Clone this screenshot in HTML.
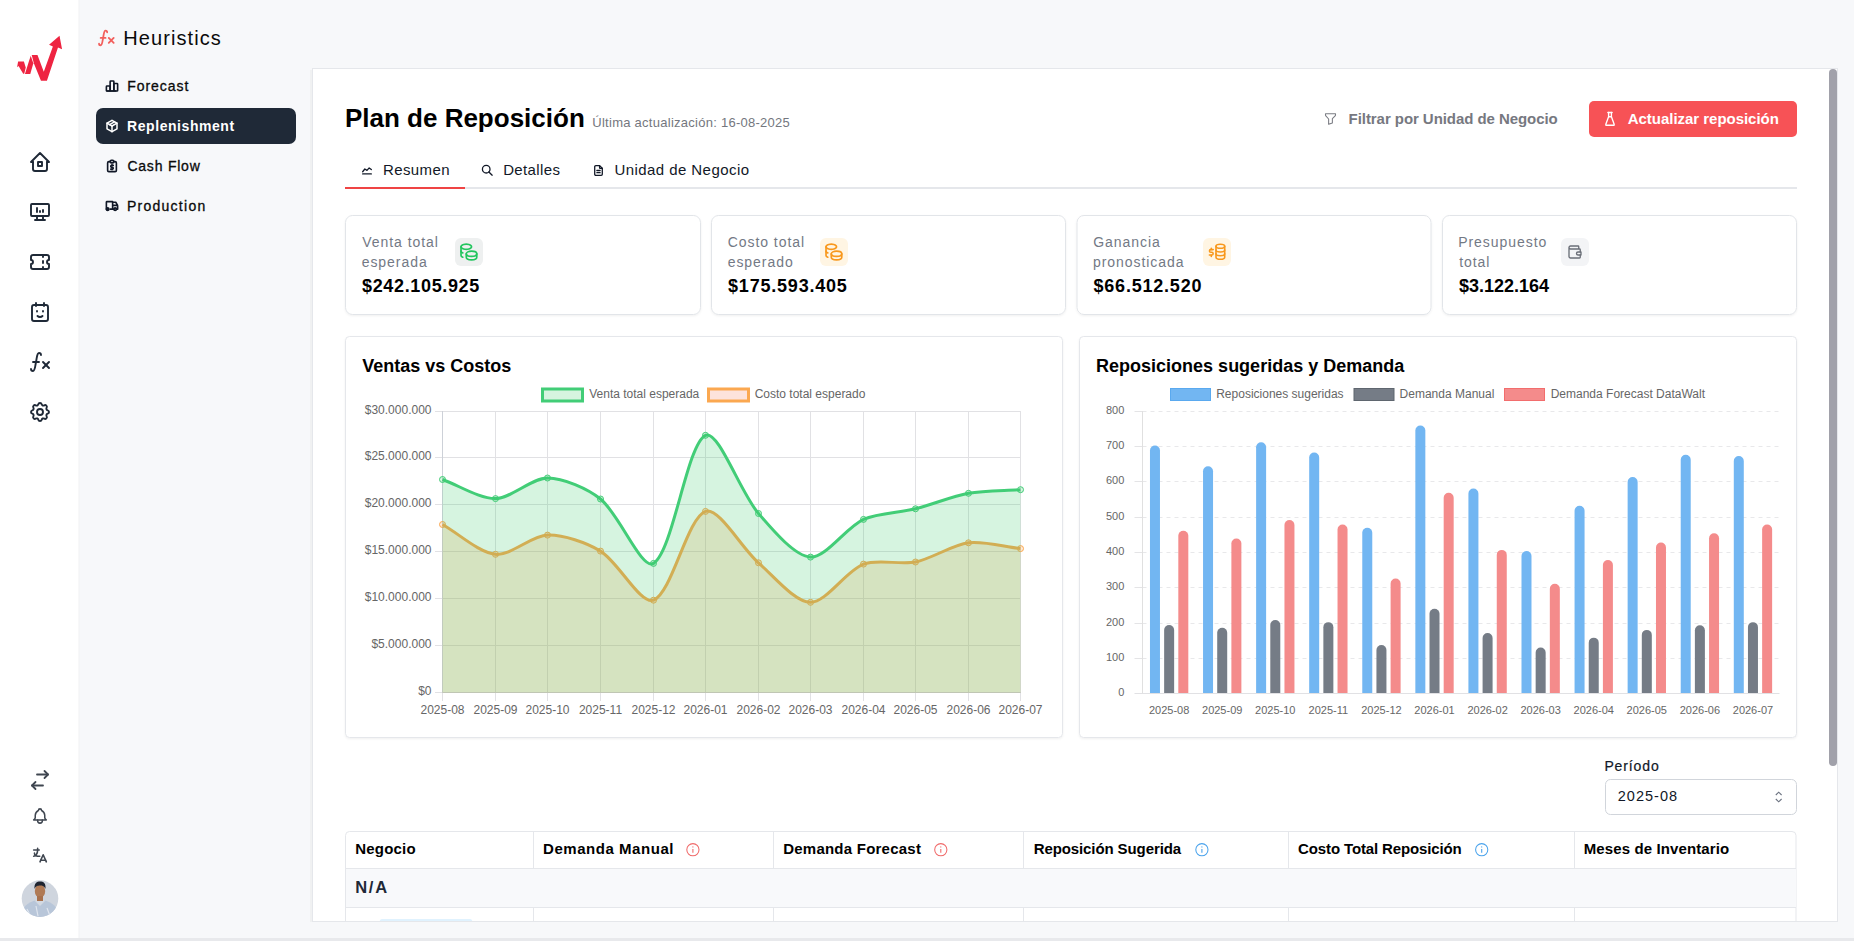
<!DOCTYPE html>
<html><head><meta charset="utf-8"><title>Plan de Reposición</title>
<style>
html,body{margin:0;padding:0;width:1854px;height:941px;overflow:hidden;background:#f7f8fa;}
svg{position:absolute;left:0;top:0;font-family:"Liberation Sans",sans-serif;}
</style></head><body>
<svg width="1854" height="941" viewBox="0 0 1854 941">
<defs><filter id="sh" x="-5%" y="-5%" width="110%" height="120%"><feDropShadow dx="0" dy="1" stdDeviation="0.8" flood-color="#000" flood-opacity="0.06"/></filter></defs>
<rect x="0" y="0" width="1854" height="941" rx="0" fill="#f7f8fa" />
<rect x="0" y="0" width="79" height="938" rx="0" fill="#ffffff" />
<rect x="78.5" y="0" width="1" height="938" rx="0" fill="#f1f2f4" />
<rect x="0" y="938" width="1854" height="3" rx="0" fill="#e8e9ec" />
<rect x="310" y="70" width="2" height="852" rx="0" fill="#f0f1f2" />
<rect x="312.5" y="68.5" width="1525" height="853" rx="0" fill="#ffffff" stroke="#e5e7eb" stroke-width="1" />
<rect x="1829" y="69" width="8" height="697" rx="4" fill="#a1a1aa" />
<g transform="translate(0,20) scale(0.08501594048884166)" fill="#ee2441"><path d="M213,489 L281,489 L303,559 L285,633 L273,633 L218,540 L201,556 Z"/>
<path d="M293,634 L356,634 L392,509 L361,421 Z"/>
<path d="M373,413 L441,413 L515,610 L622,312 L577,290 L700,185 L730,345 L682,322 L552,715 L482,715 L399,513 Z"/></g>
<g transform="translate(28,150) scale(1.0)" fill="none" stroke="#1f2937" stroke-width="1.9" stroke-linecap="round" stroke-linejoin="round" ><path d="M5 12l-2 0l9 -9l9 9l-2 0"/><path d="M5 12v7a2 2 0 0 0 2 2h10a2 2 0 0 0 2 -2v-7"/><path d="M10 12h4v4h-4z"/></g>
<g transform="translate(28,200) scale(1.0)" fill="none" stroke="#1f2937" stroke-width="1.9" stroke-linecap="round" stroke-linejoin="round" ><path d="M3 5a1 1 0 0 1 1 -1h16a1 1 0 0 1 1 1v10a1 1 0 0 1 -1 1h-16a1 1 0 0 1 -1 -1z"/><path d="M7 20h10"/><path d="M9 16v4"/><path d="M15 16v4"/><path d="M9 12v-4"/><path d="M12 12v-1"/><path d="M15 12v-2"/></g>
<g transform="translate(28,250) scale(1.0)" fill="none" stroke="#1f2937" stroke-width="1.9" stroke-linecap="round" stroke-linejoin="round" ><path d="M15 5l0 2"/><path d="M15 11l0 2"/><path d="M15 17l0 2"/><path d="M5 5h14a2 2 0 0 1 2 2v3a2 2 0 0 0 0 4v3a2 2 0 0 1 -2 2h-14a2 2 0 0 1 -2 -2v-3a2 2 0 0 0 0 -4v-3a2 2 0 0 1 2 -2"/></g>
<g transform="translate(28,300) scale(1.0)" fill="none" stroke="#1f2937" stroke-width="1.9" stroke-linecap="round" stroke-linejoin="round" ><path d="M4 7a2 2 0 0 1 2 -2h12a2 2 0 0 1 2 2v12a2 2 0 0 1 -2 2h-12a2 2 0 0 1 -2 -2z"/><path d="M8 3v3"/><path d="M16 3v3"/><path d="M9 11v.5"/><path d="M15 11v.5"/><path d="M9.5 16a3.5 3.5 0 0 0 5 0"/></g>
<g transform="translate(28,350) scale(1.0)" fill="none" stroke="#1f2937" stroke-width="1.9" stroke-linecap="round" stroke-linejoin="round" ><path d="M3 19a2 2 0 0 0 2 2c2 0 2 -4 3 -9s1 -9 3 -9a2 2 0 0 1 2 2"/><path d="M5 12h6"/><path d="M15 12l6 6"/><path d="M15 18l6 -6"/></g>
<g transform="translate(28,400) scale(1.0)" fill="none" stroke="#1f2937" stroke-width="1.9" stroke-linecap="round" stroke-linejoin="round" ><path d="M10.325 4.317c.426 -1.756 2.924 -1.756 3.35 0a1.724 1.724 0 0 0 2.573 1.066c1.543 -.94 3.31 .826 2.37 2.37a1.724 1.724 0 0 0 1.065 2.572c1.756 .426 1.756 2.924 0 3.35a1.724 1.724 0 0 0 -1.066 2.573c.94 1.543 -.826 3.31 -2.37 2.37a1.724 1.724 0 0 0 -2.572 1.065c-.426 1.756 -2.924 1.756 -3.35 0a1.724 1.724 0 0 0 -2.573 -1.066c-1.543 .94 -3.31 -.826 -2.37 -2.37a1.724 1.724 0 0 0 -1.065 -2.572c-1.756 -.426 -1.756 -2.924 0 -3.35a1.724 1.724 0 0 0 1.066 -2.573c-.94 -1.543 .826 -3.31 2.37 -2.37c1 .608 2.296 .07 2.572 -1.065z"/><path d="M9 12a3 3 0 1 0 6 0a3 3 0 0 0 -6 0"/></g>
<g transform="translate(28,768) scale(1.0)" fill="none" stroke="#3f4650" stroke-width="1.8" stroke-linecap="round" stroke-linejoin="round" ><path d="M9 6.5h11"/><path d="M16.5 3l3.5 3.5l-3.5 3.5"/><path d="M15 17.5h-11"/><path d="M7.5 14l-3.5 3.5l3.5 3.5"/></g>
<g transform="translate(30.5,806.5) scale(0.7916666666666666)" fill="none" stroke="#3f4650" stroke-width="1.9" stroke-linecap="round" stroke-linejoin="round" ><path d="M10 5a2 2 0 1 1 4 0a7 7 0 0 1 4 6v3a4 4 0 0 0 2 3h-16a4 4 0 0 0 2 -3v-3a7 7 0 0 1 4 -6"/><path d="M9 17v1a3 3 0 0 0 6 0v-1"/></g>
<g transform="translate(30.5,846) scale(0.7916666666666666)" fill="none" stroke="#3f4650" stroke-width="2" stroke-linecap="round" stroke-linejoin="round" ><path d="M4 5h7"/><path d="M9 3v2c0 4.418 -2.239 8 -5 8"/><path d="M5 9c0 2.144 2.952 3.908 6.7 4"/><path d="M12 20l4 -9l4 9"/><path d="M19.1 18h-6.2"/></g>
<g><clipPath id="av"><circle cx="40" cy="898.6" r="18.3"/></clipPath>
<g clip-path="url(#av)"><rect x="21" y="880" width="38" height="38" fill="#cfd5de"/>
<path d="M20 918 C22 906 29 900.5 40 900 C51 900.5 58 906 60 918 Z" fill="#b8c6d9"/><path d="M27 909 L31 917 M47 908 L50 916 M36 906 L38 916" stroke="#dfe5ee" stroke-width="1.2"/>
<path d="M35 901 L40 906 L45 901 L43.5 899.5 L36.5 899.5 Z" fill="#d3d9e2"/>
<ellipse cx="40" cy="891" rx="5.2" ry="6.8" fill="#b07a55"/>
<rect x="37" y="896" width="6" height="5" fill="#a8704c"/>
<path d="M34.5 889 C34 883 37 881.5 40 881.5 C43.5 881.5 46 883 45.5 889 C44.5 886 42 885.5 40 885.5 C38 885.5 35.5 886 34.5 889 Z" fill="#1e2430"/>
</g></g>
<g transform="translate(96.6,28.2) scale(0.8125)" fill="none" stroke="#f25f5c" stroke-width="2.2" stroke-linecap="round" stroke-linejoin="round" ><path d="M3 19a2 2 0 0 0 2 2c2 0 2 -4 3 -9s1 -9 3 -9a2 2 0 0 1 2 2"/><path d="M5 12h6"/><path d="M15 12l6 6"/><path d="M15 18l6 -6"/></g>
<text x="123.28" y="44.90" font-size="20" font-weight="400" fill="#0a0a0a" letter-spacing="1.081" >Heuristics</text>
<rect x="96" y="108" width="200" height="36" rx="7" fill="#1f2937" />
<text x="127.28" y="91.00" font-size="14" font-weight="400" fill="#0a0a0a" letter-spacing="0.946" stroke="#0a0a0a" stroke-width="0.3">Forecast</text>
<text x="127.12" y="131.20" font-size="14" font-weight="700" fill="#ffffff" letter-spacing="0.552" >Replenishment</text>
<text x="127.38" y="171.00" font-size="14" font-weight="400" fill="#0a0a0a" letter-spacing="0.787" stroke="#0a0a0a" stroke-width="0.3">Cash Flow</text>
<text x="126.88" y="210.90" font-size="14" font-weight="400" fill="#0a0a0a" letter-spacing="1.269" stroke="#0a0a0a" stroke-width="0.3">Production</text>
<g transform="translate(104.5,78.5) scale(0.625)" fill="none" stroke="#111827" stroke-width="2.6" stroke-linecap="round" stroke-linejoin="round" ><path d="M3 13a1 1 0 0 1 1 -1h4a1 1 0 0 1 1 1v6a1 1 0 0 1 -1 1h-4a1 1 0 0 1 -1 -1z"/><path d="M15 9a1 1 0 0 1 1 -1h4a1 1 0 0 1 1 1v10a1 1 0 0 1 -1 1h-4a1 1 0 0 1 -1 -1z"/><path d="M9 5a1 1 0 0 1 1 -1h4a1 1 0 0 1 1 1v14a1 1 0 0 1 -1 1h-4a1 1 0 0 1 -1 -1z"/><path d="M4 20h14"/></g>
<g transform="translate(104.5,118.5) scale(0.625)" fill="none" stroke="#ffffff" stroke-width="2.4" stroke-linecap="round" stroke-linejoin="round" ><path d="M12 3l8 4.5l0 9l-8 4.5l-8 -4.5l0 -9l8 -4.5"/><path d="M12 12l8 -4.5"/><path d="M12 12l0 9"/><path d="M12 12l-8 -4.5"/><path d="M16 5.25l-8 4.5"/></g>
<g transform="translate(104.5,158.5) scale(0.625)" fill="none" stroke="#111827" stroke-width="2.6" stroke-linecap="round" stroke-linejoin="round" ><path d="M9 5h-2a2 2 0 0 0 -2 2v12a2 2 0 0 0 2 2h10a2 2 0 0 0 2 -2v-12a2 2 0 0 0 -2 -2h-2"/><path d="M9 3m0 2a2 2 0 0 1 2 -2h2a2 2 0 0 1 2 2v0a2 2 0 0 1 -2 2h-2a2 2 0 0 1 -2 -2z"/><path d="M14 11h-2.5a1.5 1.5 0 0 0 0 3h1a1.5 1.5 0 0 1 0 3h-2.5"/><path d="M12 17v1m0 -8v1"/></g>
<g transform="translate(104.5,198.5) scale(0.625)" fill="none" stroke="#111827" stroke-width="2.6" stroke-linecap="round" stroke-linejoin="round" ><path d="M5 17m-2 0a2 2 0 1 0 4 0a2 2 0 1 0 -4 0"/><path d="M17 17m-2 0a2 2 0 1 0 4 0a2 2 0 1 0 -4 0"/><path d="M5 17h-2v-11a1 1 0 0 1 1 -1h9v12m-4 0h6m4 0h2v-6h-8m0 -5h5l3 5"/></g>
<text x="344.95" y="126.60" font-size="26" font-weight="700" fill="#000000" letter-spacing="0.000" >Plan de Reposición</text>
<text x="592.30" y="126.90" font-size="13" font-weight="400" fill="#74777e" letter-spacing="0.265" >Última actualización: 16-08-2025</text>
<g transform="translate(1323,111.2) scale(0.625)" fill="none" stroke="#7a7c83" stroke-width="1.7" stroke-linecap="round" stroke-linejoin="round" ><path d="M4 4h16v2.172a2 2 0 0 1 -.586 1.414l-4.414 4.414v7l-6 2v-8.5l-4.48 -4.928a2 2 0 0 1 -.52 -1.345v-2.227z"/></g>
<text x="1348.60" y="124.00" font-size="15" font-weight="700" fill="#76787f" letter-spacing="-0.062" >Filtrar por Unidad de Negocio</text>
<rect x="1589" y="101" width="208" height="36" rx="5" fill="#f75256" />
<g transform="translate(1601.5,110.4) scale(0.7083333333333334)" fill="none" stroke="#ffffff" stroke-width="1.9" stroke-linecap="round" stroke-linejoin="round" ><path d="M9 3l6 0"/><path d="M10 9l4 0"/><path d="M10 3v6l-4 11a.7 .7 0 0 0 .5 1h11a.7 .7 0 0 0 .5 -1l-4 -11v-6"/></g>
<text x="1627.72" y="124.20" font-size="15" font-weight="700" fill="#ffffff" letter-spacing="-0.029" >Actualizar reposición</text>
<rect x="345" y="187" width="1452" height="2" rx="0" fill="#e5e7eb" />
<rect x="345" y="187" width="120" height="2" rx="0" fill="#ef4444" />
<g transform="translate(360.5,163.6) scale(0.5416666666666666)" fill="none" stroke="#111827" stroke-width="2.4" stroke-linecap="round" stroke-linejoin="round" ><path d="M4 19h16"/><path d="M4 15l4 -5l4 2.5l4 -4.5l4 3"/></g>
<g transform="translate(480.8,163.8) scale(0.5416666666666666)" fill="none" stroke="#111827" stroke-width="2.4" stroke-linecap="round" stroke-linejoin="round" ><path d="M10 10m-7 0a7 7 0 1 0 14 0a7 7 0 1 0 -14 0"/><path d="M21 21l-6 -6"/></g>
<g transform="translate(592,164) scale(0.5416666666666666)" fill="none" stroke="#111827" stroke-width="2.4" stroke-linecap="round" stroke-linejoin="round" ><path d="M14 3v4a1 1 0 0 0 1 1h4"/><path d="M17 21h-10a2 2 0 0 1 -2 -2v-14a2 2 0 0 1 2 -2h7l5 5v11a2 2 0 0 1 -2 2z"/><path d="M9 12h6"/><path d="M9 16h6"/></g>
<text x="382.95" y="175.20" font-size="15" font-weight="400" fill="#111827" letter-spacing="0.417" >Resumen</text>
<text x="503.15" y="175.20" font-size="15" font-weight="400" fill="#111827" letter-spacing="0.371" >Detalles</text>
<text x="614.48" y="175.20" font-size="15" font-weight="400" fill="#111827" letter-spacing="0.433" >Unidad de Negocio</text>
<rect x="345.5" y="215.5" width="355" height="99" rx="7" fill="#ffffff" stroke="#e2e5e9" stroke-width="1" filter="url(#sh)"/>
<text x="362.30" y="246.80" font-size="14" font-weight="400" fill="#737985" letter-spacing="0.950" >Venta total</text>
<text x="361.68" y="266.70" font-size="14" font-weight="400" fill="#737985" letter-spacing="0.950" >esperada</text>
<text x="362.05" y="291.60" font-size="18" font-weight="700" fill="#000000" letter-spacing="0.648" >$242.105.925</text>
<rect x="711.5" y="215.5" width="354" height="99" rx="7" fill="#ffffff" stroke="#e2e5e9" stroke-width="1" filter="url(#sh)"/>
<text x="727.67" y="246.80" font-size="14" font-weight="400" fill="#737985" letter-spacing="0.950" >Costo total</text>
<text x="727.67" y="266.70" font-size="14" font-weight="400" fill="#737985" letter-spacing="0.950" >esperado</text>
<text x="728.05" y="291.60" font-size="18" font-weight="700" fill="#000000" letter-spacing="0.793" >$175.593.405</text>
<rect x="1077.0" y="215.5" width="354" height="99" rx="7" fill="#ffffff" stroke="#e2e5e9" stroke-width="1" filter="url(#sh)"/>
<text x="1093.17" y="246.80" font-size="14" font-weight="400" fill="#737985" letter-spacing="0.950" >Ganancia</text>
<text x="1092.92" y="266.70" font-size="14" font-weight="400" fill="#737985" letter-spacing="0.950" >pronosticada</text>
<text x="1093.55" y="291.60" font-size="18" font-weight="700" fill="#000000" letter-spacing="0.778" >$66.512.520</text>
<rect x="1442.5" y="215.5" width="354" height="99" rx="7" fill="#ffffff" stroke="#e2e5e9" stroke-width="1" filter="url(#sh)"/>
<text x="1458.17" y="246.80" font-size="14" font-weight="400" fill="#737985" letter-spacing="0.950" >Presupuesto</text>
<text x="1459.17" y="266.70" font-size="14" font-weight="400" fill="#737985" letter-spacing="0.950" >total</text>
<text x="1459.05" y="291.60" font-size="18" font-weight="700" fill="#000000" letter-spacing="-0.008" >$3.122.164</text>
<rect x="455" y="238" width="28" height="28" rx="6" fill="#eef0f0" />
<g transform="translate(458.4,241.5) scale(0.875)" fill="none" stroke="#22c55e" stroke-width="1.9" stroke-linecap="round" stroke-linejoin="round" ><path d="M9 14c0 1.657 2.686 3 6 3s6 -1.343 6 -3s-2.686 -3 -6 -3s-6 1.343 -6 3z"/><path d="M9 14v4c0 1.656 2.686 3 6 3s6 -1.344 6 -3v-4"/><path d="M3 6c0 1.072 1.144 2.062 3 2.598s4.144 .536 6 0c1.856 -.536 3 -1.526 3 -2.598c0 -1.072 -1.144 -2.062 -3 -2.598s-4.144 -.536 -6 0c-1.856 .536 -3 1.526 -3 2.598z"/><path d="M3 6v10c0 .888 .772 1.45 2 2"/><path d="M3 11c0 .888 .772 1.45 2 2"/></g>
<rect x="820" y="238" width="28" height="28" rx="6" fill="#fff5e3" />
<g transform="translate(823.4,241.5) scale(0.875)" fill="none" stroke="#f8981d" stroke-width="1.9" stroke-linecap="round" stroke-linejoin="round" ><path d="M9 14c0 1.657 2.686 3 6 3s6 -1.343 6 -3s-2.686 -3 -6 -3s-6 1.343 -6 3z"/><path d="M9 14v4c0 1.656 2.686 3 6 3s6 -1.344 6 -3v-4"/><path d="M3 6c0 1.072 1.144 2.062 3 2.598s4.144 .536 6 0c1.856 -.536 3 -1.526 3 -2.598c0 -1.072 -1.144 -2.062 -3 -2.598s-4.144 -.536 -6 0c-1.856 .536 -3 1.526 -3 2.598z"/><path d="M3 6v10c0 .888 .772 1.45 2 2"/><path d="M3 11c0 .888 .772 1.45 2 2"/></g>
<rect x="1203" y="238" width="28" height="28" rx="6" fill="#fff5e3" />
<g fill="none" stroke="#f8981d" stroke-width="1.6" stroke-linecap="round" stroke-linejoin="round"><ellipse cx="1220.35" cy="246.3" rx="4.35" ry="2"/><path d="M1216,246.3 V257.3 A4.35,2 0 0 0 1224.7,257.3 V246.3"/><path d="M1216,250 A4.35,2 0 0 0 1224.7,250"/><path d="M1216,253.7 A4.35,2 0 0 0 1224.7,253.7"/><path d="M1213.2,249.6 H1210.8 A1.35,1.35 0 0 0 1210.8,252.3 H1211.8 A1.35,1.35 0 0 1 1211.8,255 H1209.4"/><path d="M1211.3,248.2 V249.4 M1211.3,255.2 V256.4"/></g>
<rect x="1561" y="238" width="28" height="28" rx="6" fill="#f3f4f6" />
<g transform="translate(1566,243) scale(0.75)" fill="none" stroke="#6b6f78" stroke-width="1.8" stroke-linecap="round" stroke-linejoin="round" ><path d="M17 8v-3a1 1 0 0 0 -1 -1h-10a2 2 0 0 0 0 4h12a1 1 0 0 1 1 1v3m0 4v3a1 1 0 0 1 -1 1h-12a2 2 0 0 1 -2 -2v-12"/><path d="M20 12v4h-4a2 2 0 0 1 0 -4h4"/></g>
<rect x="345.5" y="336.5" width="717" height="401" rx="4" fill="#ffffff" stroke="#e5e7eb" stroke-width="1" filter="url(#sh)"/>
<rect x="1079.5" y="336.5" width="717" height="401" rx="4" fill="#ffffff" stroke="#e5e7eb" stroke-width="1" filter="url(#sh)"/>
<text x="362.18" y="372.00" font-size="18" font-weight="700" fill="#000000" letter-spacing="0.000" >Ventas vs Costos</text>
<text x="1096.08" y="372.00" font-size="18" font-weight="700" fill="#000000" letter-spacing="0.000" >Reposiciones sugeridas y Demanda</text>
<line x1="435" y1="692.5" x2="1021" y2="692.5" stroke="#e1e1e4" stroke-width="1"/>
<line x1="435" y1="645.5" x2="1021" y2="645.5" stroke="#e1e1e4" stroke-width="1"/>
<line x1="435" y1="598.5" x2="1021" y2="598.5" stroke="#e1e1e4" stroke-width="1"/>
<line x1="435" y1="551.5" x2="1021" y2="551.5" stroke="#e1e1e4" stroke-width="1"/>
<line x1="435" y1="504.5" x2="1021" y2="504.5" stroke="#e1e1e4" stroke-width="1"/>
<line x1="435" y1="457.5" x2="1021" y2="457.5" stroke="#e1e1e4" stroke-width="1"/>
<line x1="435" y1="411.5" x2="1021" y2="411.5" stroke="#e1e1e4" stroke-width="1"/>
<line x1="442.5" y1="411" x2="442.5" y2="701" stroke="#e1e1e4" stroke-width="1"/>
<line x1="495.5" y1="411" x2="495.5" y2="701" stroke="#e1e1e4" stroke-width="1"/>
<line x1="547.5" y1="411" x2="547.5" y2="701" stroke="#e1e1e4" stroke-width="1"/>
<line x1="600.5" y1="411" x2="600.5" y2="701" stroke="#e1e1e4" stroke-width="1"/>
<line x1="653.5" y1="411" x2="653.5" y2="701" stroke="#e1e1e4" stroke-width="1"/>
<line x1="705.5" y1="411" x2="705.5" y2="701" stroke="#e1e1e4" stroke-width="1"/>
<line x1="758.5" y1="411" x2="758.5" y2="701" stroke="#e1e1e4" stroke-width="1"/>
<line x1="810.5" y1="411" x2="810.5" y2="701" stroke="#e1e1e4" stroke-width="1"/>
<line x1="863.5" y1="411" x2="863.5" y2="701" stroke="#e1e1e4" stroke-width="1"/>
<line x1="915.5" y1="411" x2="915.5" y2="701" stroke="#e1e1e4" stroke-width="1"/>
<line x1="968.5" y1="411" x2="968.5" y2="701" stroke="#e1e1e4" stroke-width="1"/>
<line x1="1020.5" y1="411" x2="1020.5" y2="701" stroke="#e1e1e4" stroke-width="1"/>
<line x1="442.5" y1="411" x2="442.5" y2="692.5" stroke="#cdd1d8" stroke-width="1"/>
<line x1="442" y1="692.5" x2="1021" y2="692.5" stroke="#cccccc" stroke-width="1"/>
<text x="431.50" y="695.10" font-size="12" font-weight="400" fill="#666666" text-anchor="end" >$0</text>
<text x="431.50" y="648.10" font-size="12" font-weight="400" fill="#666666" text-anchor="end" >$5.000.000</text>
<text x="431.50" y="601.10" font-size="12" font-weight="400" fill="#666666" text-anchor="end" >$10.000.000</text>
<text x="431.50" y="554.10" font-size="12" font-weight="400" fill="#666666" text-anchor="end" >$15.000.000</text>
<text x="431.50" y="507.10" font-size="12" font-weight="400" fill="#666666" text-anchor="end" >$20.000.000</text>
<text x="431.50" y="460.10" font-size="12" font-weight="400" fill="#666666" text-anchor="end" >$25.000.000</text>
<text x="431.50" y="414.10" font-size="12" font-weight="400" fill="#666666" text-anchor="end" >$30.000.000</text>
<text x="442.50" y="714.00" font-size="12" font-weight="400" fill="#666666" text-anchor="middle" >2025-08</text>
<text x="495.50" y="714.00" font-size="12" font-weight="400" fill="#666666" text-anchor="middle" >2025-09</text>
<text x="547.50" y="714.00" font-size="12" font-weight="400" fill="#666666" text-anchor="middle" >2025-10</text>
<text x="600.50" y="714.00" font-size="12" font-weight="400" fill="#666666" text-anchor="middle" >2025-11</text>
<text x="653.50" y="714.00" font-size="12" font-weight="400" fill="#666666" text-anchor="middle" >2025-12</text>
<text x="705.50" y="714.00" font-size="12" font-weight="400" fill="#666666" text-anchor="middle" >2026-01</text>
<text x="758.50" y="714.00" font-size="12" font-weight="400" fill="#666666" text-anchor="middle" >2026-02</text>
<text x="810.50" y="714.00" font-size="12" font-weight="400" fill="#666666" text-anchor="middle" >2026-03</text>
<text x="863.50" y="714.00" font-size="12" font-weight="400" fill="#666666" text-anchor="middle" >2026-04</text>
<text x="915.50" y="714.00" font-size="12" font-weight="400" fill="#666666" text-anchor="middle" >2026-05</text>
<text x="968.50" y="714.00" font-size="12" font-weight="400" fill="#666666" text-anchor="middle" >2026-06</text>
<text x="1020.50" y="714.00" font-size="12" font-weight="400" fill="#666666" text-anchor="middle" >2026-07</text>
<path d="M442.50,524.50 C458.40,533.44 479.02,552.64 495.50,554.30 C510.52,555.82 531.74,535.58 547.50,535.10 C563.24,534.62 586.70,542.63 600.50,551.10 C618.50,562.16 640.51,605.11 653.50,600.20 C672.01,593.20 687.16,517.93 705.50,511.40 C718.66,506.71 741.78,548.33 758.50,562.80 C773.28,575.60 794.75,602.11 810.50,602.30 C826.25,602.50 845.97,570.83 863.50,564.10 C877.47,558.74 900.38,565.07 915.50,562.00 C931.88,558.68 952.16,544.88 968.50,542.80 C983.66,540.86 1004.90,546.86 1020.50,548.60 L1020.50,692.5 L442.50,692.5 Z" fill="rgba(251,160,75,0.22)"/>
<path d="M442.50,524.50 C458.40,533.44 479.02,552.64 495.50,554.30 C510.52,555.82 531.74,535.58 547.50,535.10 C563.24,534.62 586.70,542.63 600.50,551.10 C618.50,562.16 640.51,605.11 653.50,600.20 C672.01,593.20 687.16,517.93 705.50,511.40 C718.66,506.71 741.78,548.33 758.50,562.80 C773.28,575.60 794.75,602.11 810.50,602.30 C826.25,602.50 845.97,570.83 863.50,564.10 C877.47,558.74 900.38,565.07 915.50,562.00 C931.88,558.68 952.16,544.88 968.50,542.80 C983.66,540.86 1004.90,546.86 1020.50,548.60" fill="none" stroke="#fba850" stroke-width="3"/>
<circle cx="442.50" cy="524.50" r="3" fill="rgba(251,160,75,0.22)" stroke="#fba850" stroke-width="1"/>
<circle cx="495.50" cy="554.30" r="3" fill="rgba(251,160,75,0.22)" stroke="#fba850" stroke-width="1"/>
<circle cx="547.50" cy="535.10" r="3" fill="rgba(251,160,75,0.22)" stroke="#fba850" stroke-width="1"/>
<circle cx="600.50" cy="551.10" r="3" fill="rgba(251,160,75,0.22)" stroke="#fba850" stroke-width="1"/>
<circle cx="653.50" cy="600.20" r="3" fill="rgba(251,160,75,0.22)" stroke="#fba850" stroke-width="1"/>
<circle cx="705.50" cy="511.40" r="3" fill="rgba(251,160,75,0.22)" stroke="#fba850" stroke-width="1"/>
<circle cx="758.50" cy="562.80" r="3" fill="rgba(251,160,75,0.22)" stroke="#fba850" stroke-width="1"/>
<circle cx="810.50" cy="602.30" r="3" fill="rgba(251,160,75,0.22)" stroke="#fba850" stroke-width="1"/>
<circle cx="863.50" cy="564.10" r="3" fill="rgba(251,160,75,0.22)" stroke="#fba850" stroke-width="1"/>
<circle cx="915.50" cy="562.00" r="3" fill="rgba(251,160,75,0.22)" stroke="#fba850" stroke-width="1"/>
<circle cx="968.50" cy="542.80" r="3" fill="rgba(251,160,75,0.22)" stroke="#fba850" stroke-width="1"/>
<circle cx="1020.50" cy="548.60" r="3" fill="rgba(251,160,75,0.22)" stroke="#fba850" stroke-width="1"/>
<path d="M442.50,479.50 C458.40,485.23 479.69,498.83 495.50,498.60 C511.19,498.38 531.90,477.94 547.50,478.00 C563.40,478.06 587.59,488.60 600.50,499.00 C619.39,514.22 641.65,570.59 653.50,563.40 C673.15,551.48 686.79,444.19 705.50,435.30 C718.29,429.22 740.17,492.24 758.50,513.50 C771.67,528.78 794.42,556.20 810.50,557.10 C825.92,557.97 846.15,527.38 863.50,519.40 C877.65,512.89 900.06,512.64 915.50,508.80 C931.56,504.81 952.30,496.25 968.50,493.30 C983.80,490.52 1004.90,490.78 1020.50,489.70 L1020.50,692.5 L442.50,692.5 Z" fill="rgba(52,199,100,0.2)"/>
<path d="M442.50,479.50 C458.40,485.23 479.69,498.83 495.50,498.60 C511.19,498.38 531.90,477.94 547.50,478.00 C563.40,478.06 587.59,488.60 600.50,499.00 C619.39,514.22 641.65,570.59 653.50,563.40 C673.15,551.48 686.79,444.19 705.50,435.30 C718.29,429.22 740.17,492.24 758.50,513.50 C771.67,528.78 794.42,556.20 810.50,557.10 C825.92,557.97 846.15,527.38 863.50,519.40 C877.65,512.89 900.06,512.64 915.50,508.80 C931.56,504.81 952.30,496.25 968.50,493.30 C983.80,490.52 1004.90,490.78 1020.50,489.70" fill="none" stroke="#42cd77" stroke-width="3"/>
<circle cx="442.50" cy="479.50" r="3" fill="rgba(52,199,100,0.2)" stroke="#42cd77" stroke-width="1"/>
<circle cx="495.50" cy="498.60" r="3" fill="rgba(52,199,100,0.2)" stroke="#42cd77" stroke-width="1"/>
<circle cx="547.50" cy="478.00" r="3" fill="rgba(52,199,100,0.2)" stroke="#42cd77" stroke-width="1"/>
<circle cx="600.50" cy="499.00" r="3" fill="rgba(52,199,100,0.2)" stroke="#42cd77" stroke-width="1"/>
<circle cx="653.50" cy="563.40" r="3" fill="rgba(52,199,100,0.2)" stroke="#42cd77" stroke-width="1"/>
<circle cx="705.50" cy="435.30" r="3" fill="rgba(52,199,100,0.2)" stroke="#42cd77" stroke-width="1"/>
<circle cx="758.50" cy="513.50" r="3" fill="rgba(52,199,100,0.2)" stroke="#42cd77" stroke-width="1"/>
<circle cx="810.50" cy="557.10" r="3" fill="rgba(52,199,100,0.2)" stroke="#42cd77" stroke-width="1"/>
<circle cx="863.50" cy="519.40" r="3" fill="rgba(52,199,100,0.2)" stroke="#42cd77" stroke-width="1"/>
<circle cx="915.50" cy="508.80" r="3" fill="rgba(52,199,100,0.2)" stroke="#42cd77" stroke-width="1"/>
<circle cx="968.50" cy="493.30" r="3" fill="rgba(52,199,100,0.2)" stroke="#42cd77" stroke-width="1"/>
<circle cx="1020.50" cy="489.70" r="3" fill="rgba(52,199,100,0.2)" stroke="#42cd77" stroke-width="1"/>
<rect x="542.5" y="389" width="40" height="12" fill="rgba(52,199,100,0.2)" stroke="#42cd77" stroke-width="3"/>
<text x="589.20" y="398.00" font-size="12" font-weight="400" fill="#666666" letter-spacing="0.000" >Venta total esperada</text>
<rect x="708.5" y="389" width="40" height="12" fill="#fde3dc" stroke="#fba850" stroke-width="3"/>
<text x="754.67" y="398.00" font-size="12" font-weight="400" fill="#666666" letter-spacing="0.000" >Costo total esperado</text>
<line x1="1134.5" y1="693.5" x2="1779.5" y2="693.5" stroke="#e1e1e4" stroke-width="1"/>
<text x="1124.30" y="696.00" font-size="11" font-weight="400" fill="#666666" text-anchor="end" >0</text>
<line x1="1134.5" y1="658.5" x2="1142.5" y2="658.5" stroke="#e4e4e6" stroke-width="1"/>
<line x1="1142.5" y1="658.5" x2="1779.5" y2="658.5" stroke="#e8e8ea" stroke-width="1" stroke-dasharray="4 4"/>
<text x="1124.30" y="661.00" font-size="11" font-weight="400" fill="#666666" text-anchor="end" >100</text>
<line x1="1134.5" y1="623.5" x2="1142.5" y2="623.5" stroke="#e4e4e6" stroke-width="1"/>
<line x1="1142.5" y1="623.5" x2="1779.5" y2="623.5" stroke="#e8e8ea" stroke-width="1" stroke-dasharray="4 4"/>
<text x="1124.30" y="626.00" font-size="11" font-weight="400" fill="#666666" text-anchor="end" >200</text>
<line x1="1134.5" y1="587.5" x2="1142.5" y2="587.5" stroke="#e4e4e6" stroke-width="1"/>
<line x1="1142.5" y1="587.5" x2="1779.5" y2="587.5" stroke="#e8e8ea" stroke-width="1" stroke-dasharray="4 4"/>
<text x="1124.30" y="590.00" font-size="11" font-weight="400" fill="#666666" text-anchor="end" >300</text>
<line x1="1134.5" y1="552.5" x2="1142.5" y2="552.5" stroke="#e4e4e6" stroke-width="1"/>
<line x1="1142.5" y1="552.5" x2="1779.5" y2="552.5" stroke="#e8e8ea" stroke-width="1" stroke-dasharray="4 4"/>
<text x="1124.30" y="555.00" font-size="11" font-weight="400" fill="#666666" text-anchor="end" >400</text>
<line x1="1134.5" y1="517.5" x2="1142.5" y2="517.5" stroke="#e4e4e6" stroke-width="1"/>
<line x1="1142.5" y1="517.5" x2="1779.5" y2="517.5" stroke="#e8e8ea" stroke-width="1" stroke-dasharray="4 4"/>
<text x="1124.30" y="520.00" font-size="11" font-weight="400" fill="#666666" text-anchor="end" >500</text>
<line x1="1134.5" y1="481.5" x2="1142.5" y2="481.5" stroke="#e4e4e6" stroke-width="1"/>
<line x1="1142.5" y1="481.5" x2="1779.5" y2="481.5" stroke="#e8e8ea" stroke-width="1" stroke-dasharray="4 4"/>
<text x="1124.30" y="484.00" font-size="11" font-weight="400" fill="#666666" text-anchor="end" >600</text>
<line x1="1134.5" y1="446.5" x2="1142.5" y2="446.5" stroke="#e4e4e6" stroke-width="1"/>
<line x1="1142.5" y1="446.5" x2="1779.5" y2="446.5" stroke="#e8e8ea" stroke-width="1" stroke-dasharray="4 4"/>
<text x="1124.30" y="449.00" font-size="11" font-weight="400" fill="#666666" text-anchor="end" >700</text>
<line x1="1134.5" y1="411.5" x2="1142.5" y2="411.5" stroke="#e4e4e6" stroke-width="1"/>
<line x1="1142.5" y1="411.5" x2="1779.5" y2="411.5" stroke="#e8e8ea" stroke-width="1" stroke-dasharray="4 4"/>
<text x="1124.30" y="414.00" font-size="11" font-weight="400" fill="#666666" text-anchor="end" >800</text>
<line x1="1142.5" y1="411" x2="1142.5" y2="693.5" stroke="#e0e0e0" stroke-width="1"/>
<path d="M1149.97,693.00 V450.54 A5,5 0 0 1 1159.97,450.54 V693.00 Z" fill="#72b6f2"/>
<path d="M1164.14,693.00 V629.97 A5,5 0 0 1 1174.14,629.97 V693.00 Z" fill="#757c86"/>
<path d="M1178.31,693.00 V535.85 A5,5 0 0 1 1188.31,535.85 V693.00 Z" fill="#f48b8b"/>
<text x="1169.14" y="714.00" font-size="11" font-weight="400" fill="#666666" text-anchor="middle" >2025-08</text>
<path d="M1203.04,693.00 V471.34 A5,5 0 0 1 1213.04,471.34 V693.00 Z" fill="#72b6f2"/>
<path d="M1217.21,693.00 V632.79 A5,5 0 0 1 1227.21,632.79 V693.00 Z" fill="#757c86"/>
<path d="M1231.38,693.00 V543.61 A5,5 0 0 1 1241.38,543.61 V693.00 Z" fill="#f48b8b"/>
<text x="1222.21" y="714.00" font-size="11" font-weight="400" fill="#666666" text-anchor="middle" >2025-09</text>
<path d="M1256.12,693.00 V447.37 A5,5 0 0 1 1266.12,447.37 V693.00 Z" fill="#72b6f2"/>
<path d="M1270.29,693.00 V625.03 A5,5 0 0 1 1280.29,625.03 V693.00 Z" fill="#757c86"/>
<path d="M1284.46,693.00 V524.92 A5,5 0 0 1 1294.46,524.92 V693.00 Z" fill="#f48b8b"/>
<text x="1275.29" y="714.00" font-size="11" font-weight="400" fill="#666666" text-anchor="middle" >2025-10</text>
<path d="M1309.19,693.00 V457.60 A5,5 0 0 1 1319.19,457.60 V693.00 Z" fill="#72b6f2"/>
<path d="M1323.36,693.00 V627.15 A5,5 0 0 1 1333.36,627.15 V693.00 Z" fill="#757c86"/>
<path d="M1337.53,693.00 V529.50 A5,5 0 0 1 1347.53,529.50 V693.00 Z" fill="#f48b8b"/>
<text x="1328.36" y="714.00" font-size="11" font-weight="400" fill="#666666" text-anchor="middle" >2025-11</text>
<path d="M1362.27,693.00 V532.68 A5,5 0 0 1 1372.27,532.68 V693.00 Z" fill="#72b6f2"/>
<path d="M1376.44,693.00 V650.06 A5,5 0 0 1 1386.44,650.06 V693.00 Z" fill="#757c86"/>
<path d="M1390.61,693.00 V583.44 A5,5 0 0 1 1400.61,583.44 V693.00 Z" fill="#f48b8b"/>
<text x="1381.44" y="714.00" font-size="11" font-weight="400" fill="#666666" text-anchor="middle" >2025-12</text>
<path d="M1415.34,693.00 V430.45 A5,5 0 0 1 1425.34,430.45 V693.00 Z" fill="#72b6f2"/>
<path d="M1429.51,693.00 V613.75 A5,5 0 0 1 1439.51,613.75 V693.00 Z" fill="#757c86"/>
<path d="M1443.68,693.00 V497.78 A5,5 0 0 1 1453.68,497.78 V693.00 Z" fill="#f48b8b"/>
<text x="1434.51" y="714.00" font-size="11" font-weight="400" fill="#666666" text-anchor="middle" >2026-01</text>
<path d="M1468.42,693.00 V493.55 A5,5 0 0 1 1478.42,493.55 V693.00 Z" fill="#72b6f2"/>
<path d="M1482.59,693.00 V638.08 A5,5 0 0 1 1492.59,638.08 V693.00 Z" fill="#757c86"/>
<path d="M1496.76,693.00 V554.88 A5,5 0 0 1 1506.76,554.88 V693.00 Z" fill="#f48b8b"/>
<text x="1487.59" y="714.00" font-size="11" font-weight="400" fill="#666666" text-anchor="middle" >2026-02</text>
<path d="M1521.49,693.00 V555.94 A5,5 0 0 1 1531.49,555.94 V693.00 Z" fill="#72b6f2"/>
<path d="M1535.66,693.00 V652.53 A5,5 0 0 1 1545.66,652.53 V693.00 Z" fill="#757c86"/>
<path d="M1549.83,693.00 V588.73 A5,5 0 0 1 1559.83,588.73 V693.00 Z" fill="#f48b8b"/>
<text x="1540.66" y="714.00" font-size="11" font-weight="400" fill="#666666" text-anchor="middle" >2026-03</text>
<path d="M1574.57,693.00 V510.82 A5,5 0 0 1 1584.57,510.82 V693.00 Z" fill="#72b6f2"/>
<path d="M1588.74,693.00 V642.66 A5,5 0 0 1 1598.74,642.66 V693.00 Z" fill="#757c86"/>
<path d="M1602.91,693.00 V565.11 A5,5 0 0 1 1612.91,565.11 V693.00 Z" fill="#f48b8b"/>
<text x="1593.74" y="714.00" font-size="11" font-weight="400" fill="#666666" text-anchor="middle" >2026-04</text>
<path d="M1627.64,693.00 V481.92 A5,5 0 0 1 1637.64,481.92 V693.00 Z" fill="#72b6f2"/>
<path d="M1641.81,693.00 V634.90 A5,5 0 0 1 1651.81,634.90 V693.00 Z" fill="#757c86"/>
<path d="M1655.98,693.00 V547.48 A5,5 0 0 1 1665.98,547.48 V693.00 Z" fill="#f48b8b"/>
<text x="1646.81" y="714.00" font-size="11" font-weight="400" fill="#666666" text-anchor="middle" >2026-05</text>
<path d="M1680.72,693.00 V459.71 A5,5 0 0 1 1690.72,459.71 V693.00 Z" fill="#72b6f2"/>
<path d="M1694.89,693.00 V630.32 A5,5 0 0 1 1704.89,630.32 V693.00 Z" fill="#757c86"/>
<path d="M1709.06,693.00 V538.32 A5,5 0 0 1 1719.06,538.32 V693.00 Z" fill="#f48b8b"/>
<text x="1699.89" y="714.00" font-size="11" font-weight="400" fill="#666666" text-anchor="middle" >2026-06</text>
<path d="M1733.79,693.00 V461.12 A5,5 0 0 1 1743.79,461.12 V693.00 Z" fill="#72b6f2"/>
<path d="M1747.96,693.00 V627.15 A5,5 0 0 1 1757.96,627.15 V693.00 Z" fill="#757c86"/>
<path d="M1762.13,693.00 V529.50 A5,5 0 0 1 1772.13,529.50 V693.00 Z" fill="#f48b8b"/>
<text x="1752.96" y="714.00" font-size="11" font-weight="400" fill="#666666" text-anchor="middle" >2026-07</text>
<rect x="1170.5" y="388.5" width="40" height="12" fill="#72b6f2" stroke="#5aa9ef" stroke-width="1"/>
<text x="1216.20" y="398.00" font-size="12" font-weight="400" fill="#666666" letter-spacing="0.000" >Reposiciones sugeridas</text>
<rect x="1354" y="388.5" width="40" height="12" fill="#757c86" stroke="#5f666f" stroke-width="1"/>
<text x="1399.60" y="398.00" font-size="12" font-weight="400" fill="#666666" letter-spacing="0.000" >Demanda Manual</text>
<rect x="1504.5" y="388.5" width="40" height="12" fill="#f48b8b" stroke="#f26d6d" stroke-width="1"/>
<text x="1550.70" y="398.00" font-size="12" font-weight="400" fill="#666666" letter-spacing="0.000" >Demanda Forecast DataWalt</text>
<text x="1604.38" y="771.00" font-size="14" font-weight="400" fill="#111827" letter-spacing="0.888" stroke="#111827" stroke-width="0.2">Período</text>
<rect x="1605.5" y="779.5" width="191" height="35" rx="5" fill="#ffffff" stroke="#d1d5db" stroke-width="1" />
<text x="1617.75" y="800.90" font-size="14.5" font-weight="400" fill="#111827" letter-spacing="1.021" >2025-08</text>
<path d="M1775.8,795 L1778.7,792.2 L1781.6,795 M1775.8,799 L1778.7,801.8 L1781.6,799" fill="none" stroke="#6b7280" stroke-width="1.1"/>
<path d="M345.5,921 V835.5 a4,4 0 0 1 4,-4 H1792 a4,4 0 0 1 4,4 V921" fill="#ffffff" stroke="#e5e7eb" stroke-width="1"/>
<rect x="346" y="868.5" width="1450" height="39" rx="0" fill="#f8f9fb" />
<line x1="345.5" y1="868.5" x2="1796" y2="868.5" stroke="#e5e7eb"/>
<line x1="345.5" y1="907.5" x2="1796" y2="907.5" stroke="#e5e7eb"/>
<line x1="533.5" y1="832" x2="533.5" y2="868" stroke="#e5e7eb"/>
<line x1="533.5" y1="908" x2="533.5" y2="921" stroke="#e5e7eb"/>
<line x1="773.5" y1="832" x2="773.5" y2="868" stroke="#e5e7eb"/>
<line x1="773.5" y1="908" x2="773.5" y2="921" stroke="#e5e7eb"/>
<line x1="1023.5" y1="832" x2="1023.5" y2="868" stroke="#e5e7eb"/>
<line x1="1023.5" y1="908" x2="1023.5" y2="921" stroke="#e5e7eb"/>
<line x1="1288.5" y1="832" x2="1288.5" y2="868" stroke="#e5e7eb"/>
<line x1="1288.5" y1="908" x2="1288.5" y2="921" stroke="#e5e7eb"/>
<line x1="1574.5" y1="832" x2="1574.5" y2="868" stroke="#e5e7eb"/>
<line x1="1574.5" y1="908" x2="1574.5" y2="921" stroke="#e5e7eb"/>
<text x="355.30" y="853.80" font-size="15" font-weight="700" fill="#000000" letter-spacing="0.179" >Negocio</text>
<text x="543.00" y="853.80" font-size="15" font-weight="700" fill="#000000" letter-spacing="0.548" >Demanda Manual</text>
<text x="783.20" y="853.80" font-size="15" font-weight="700" fill="#000000" letter-spacing="0.232" >Demanda Forecast</text>
<text x="1033.70" y="853.80" font-size="15" font-weight="700" fill="#000000" letter-spacing="-0.099" >Reposición Sugerida</text>
<text x="1298.08" y="853.80" font-size="15" font-weight="700" fill="#000000" letter-spacing="-0.129" >Costo Total Reposición</text>
<text x="1583.70" y="853.80" font-size="15" font-weight="700" fill="#000000" letter-spacing="0.118" >Meses de Inventario</text>
<text x="355.18" y="893.00" font-size="16.5" font-weight="700" fill="#1f2937" letter-spacing="1.762" >N/A</text>
<circle cx="692.9" cy="849.7" r="6.1" fill="none" stroke="#f06a6a" stroke-width="1.05"/><line x1="692.9" y1="848.9000000000001" x2="692.9" y2="852.7" stroke="#f06a6a" stroke-width="1.1"/><circle cx="692.9" cy="846.9000000000001" r="0.6" fill="#f06a6a"/>
<circle cx="940.8" cy="849.7" r="6.1" fill="none" stroke="#f06a6a" stroke-width="1.05"/><line x1="940.8" y1="848.9000000000001" x2="940.8" y2="852.7" stroke="#f06a6a" stroke-width="1.1"/><circle cx="940.8" cy="846.9000000000001" r="0.6" fill="#f06a6a"/>
<circle cx="1201.9" cy="849.7" r="6.1" fill="none" stroke="#4aa3ec" stroke-width="1.05"/><line x1="1201.9" y1="848.9000000000001" x2="1201.9" y2="852.7" stroke="#4aa3ec" stroke-width="1.1"/><circle cx="1201.9" cy="846.9000000000001" r="0.6" fill="#4aa3ec"/>
<circle cx="1481.7" cy="849.7" r="6.1" fill="none" stroke="#4aa3ec" stroke-width="1.05"/><line x1="1481.7" y1="848.9000000000001" x2="1481.7" y2="852.7" stroke="#4aa3ec" stroke-width="1.1"/><circle cx="1481.7" cy="846.9000000000001" r="0.6" fill="#4aa3ec"/>
<rect x="380" y="919" width="92" height="3" rx="2" fill="#e0f2fe" />
<rect x="313" y="921.5" width="1524" height="15.5" rx="0" fill="#f7f8fa" />
<line x1="312.5" y1="921.5" x2="1837.5" y2="921.5" stroke="#e5e7eb"/>
</svg>
</body></html>
